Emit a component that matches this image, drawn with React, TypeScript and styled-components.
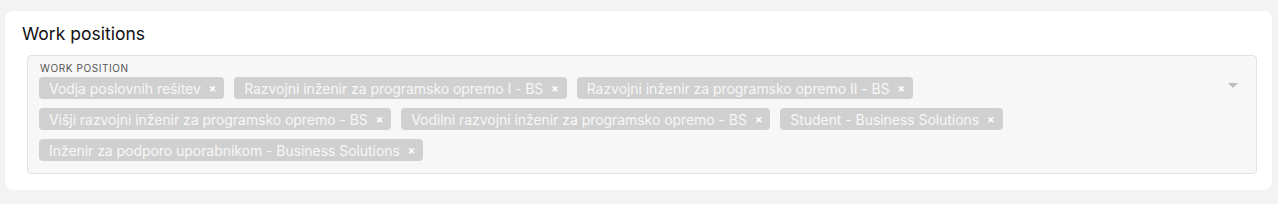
import React from "react";
import styled, { createGlobalStyle } from "styled-components";

const Global = createGlobalStyle`
  html, body { margin: 0; padding: 0; background: #f3f3f3; }
  body { font-family: Inter, "Noto Sans", sans-serif; }
`;

const Page = styled.div`
  padding: 11px 6px 0 5px;
`;

const Card = styled.section`
  background: #ffffff;
  border-radius: 8px;
  padding: 12px 15px 16px 22px;
  box-shadow: 0 0 1px rgba(0,0,0,0.04);
`;

const Title = styled.h2`
  margin: 0 0 11px -5px;
  font-size: 17.5px;
  line-height: 21px;
  font-weight: 400;
  color: #111;
`;

const Field = styled.div`
  display: flex;
  background: #f7f7f7;
  border: 1px solid #e2e2e2;
  border-radius: 4px;
  padding: 6px 12px 12px 11px;
`;

const Content = styled.div`
  flex: 1;
  display: flex;
  flex-direction: column;
`;

const Label = styled.div`
  font-size: 10px;
  line-height: 12px;
  letter-spacing: 0.6px;
  text-transform: uppercase;
  color: #555;
  margin: 0 0 3px 1px;
`;

const Chips = styled.div`
  display: flex;
  flex-wrap: wrap;
  gap: 9px 10px;
`;

const Chip = styled.span`
  display: inline-flex;
  align-items: center;
  height: 22px;
  padding: 0 8px 0 10px;
  background: #d0d0d0;
  border-radius: 4px;
  color: #f7f7f7;
  font-size: 14px;
  letter-spacing: -0.05px;
  white-space: nowrap;
`;

const Remove = styled.span`
  margin-left: 8px;
  font-size: 11px;
  font-weight: 700;
  color: #ffffff;
  line-height: 1;
`;

const Arrow = styled.div`
  width: 0;
  height: 0;
  margin: 21px 6px 0 0;
  border-left: 5px solid transparent;
  border-right: 5px solid transparent;
  border-top: 5px solid #bdbdbd;
`;

const positions = [
  "Vodja poslovnih rešitev",
  "Razvojni inženir za programsko opremo I - BS",
  "Razvojni inženir za programsko opremo II - BS",
  "Višji razvojni inženir za programsko opremo - BS",
  "Vodilni razvojni inženir za programsko opremo - BS",
  "Student - Business Solutions",
  "Inženir za podporo uporabnikom - Business Solutions",
];

export default function App() {
  return (
    <Page>
      <Global />
      <Card>
        <Title>Work positions</Title>
        <Field>
          <Content>
            <Label>Work position</Label>
            <Chips>
              {positions.map((p) => (
                <Chip key={p}>
                  {p}
                  <Remove>×</Remove>
                </Chip>
              ))}
            </Chips>
          </Content>
          <Arrow />
        </Field>
      </Card>
    </Page>
  );
}
